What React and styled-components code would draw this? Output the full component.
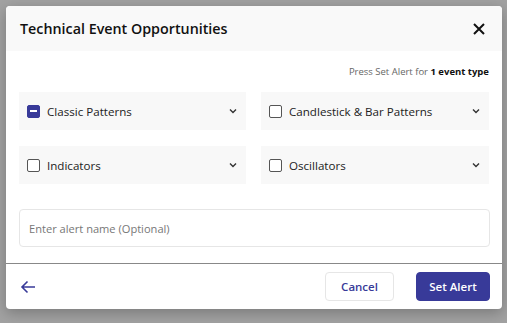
import React from 'react';
import styled, { createGlobalStyle } from 'styled-components';

const GlobalStyle = createGlobalStyle`
  html, body {
    margin: 0;
    padding: 0;
    background: #a2a2a2;
    font-family: "Open Sans", "Noto Sans", sans-serif;
  }
  * { box-sizing: border-box; }
`;

const Overlay = styled.div`
  width: 507px;
  height: 323px;
  padding: 6px 5px 0 6px;
  background: #a2a2a2;
  overflow: hidden;
`;

const Modal = styled.div`
  width: 496px;
  height: 303px;
  background: #fff;
  border-radius: 4px;
  box-shadow: 0 4px 14px rgba(0, 0, 0, 0.25);
  display: flex;
  flex-direction: column;
  overflow: hidden;
`;

const Header = styled.div`
  height: 45px;
  background: #f9f9f9;
  display: flex;
  align-items: center;
  justify-content: space-between;
  padding: 0 15px 0 14px;
`;

const Title = styled.h2`
  margin: 0;
  font-size: 14.3px;
  font-weight: 600;
  color: #111;
`;

const CloseBtn = styled.button`
  border: 0;
  background: none;
  padding: 0;
  width: 16px;
  height: 16px;
  display: flex;
  align-items: center;
  justify-content: center;
  cursor: pointer;
`;

const Body = styled.div`
  padding: 14px 12px 16px 13px;
  display: flex;
  flex-direction: column;
`;

const Hint = styled.div`
  text-align: right;
  font-size: 9.5px;
  color: #666;
  line-height: 13px;
  padding-right: 1px;
  b { color: #111; font-weight: 700; }
`;

const Grid = styled.div`
  margin-top: 14px;
  display: grid;
  grid-template-columns: 227px 228px;
  column-gap: 15px;
  row-gap: 16px;
`;

const Card = styled.div`
  height: 38px;
  background: #f8f8f8;
  display: flex;
  align-items: center;
  padding: 0 8px 0 8px;
  cursor: pointer;
`;

const Box = styled.span`
  width: 13px;
  height: 13px;
  border-radius: 2px;
  border: 1px solid ${p => (p.$on ? '#383a99' : '#555')};
  background: ${p => (p.$on ? '#383a99' : '#fff')};
  display: flex;
  align-items: center;
  justify-content: center;
  flex-shrink: 0;
  &::after {
    content: '';
    display: ${p => (p.$on ? 'block' : 'none')};
    width: 7px;
    height: 2px;
    background: #fff;
  }
`;

const Label = styled.span`
  margin-left: 7px;
  font-size: 11.6px;
  color: #222;
  flex: 1;
`;

const Input = styled.input`
  margin-top: 25px;
  height: 38px;
  width: 100%;
  border: 1px solid #e6e6e6;
  border-radius: 4px;
  padding: 0 9px;
  font-family: inherit;
  font-size: 11.1px;
  color: #222;
  outline: none;
  &::placeholder { color: #777; }
`;

const Footer = styled.div`
  border-top: 1px solid #888;
  flex: 1;
  display: flex;
  align-items: center;
  padding: 0 12px 0 14px;
  gap: 22px;
`;

const Back = styled.button`
  border: 0;
  background: none;
  padding: 0;
  margin-right: auto;
  display: flex;
  cursor: pointer;
`;

const Button = styled.button`
  height: 29px;
  border-radius: 4px;
  font-family: inherit;
  font-size: 11.5px;
  font-weight: 600;
  cursor: pointer;
  padding: 0;
  width: ${p => (p.$primary ? '74px' : '69px')};
  border: 1px solid ${p => (p.$primary ? '#383a99' : '#e6e6e6')};
  background: ${p => (p.$primary ? '#383a99' : '#fff')};
  color: ${p => (p.$primary ? '#fff' : '#383a99')};
`;

const Chevron = () => (
  <svg width="10" height="10" viewBox="0 0 10 10">
    <path d="M2 3.5 L5 6.5 L8 3.5" fill="none" stroke="#333" strokeWidth="1.4" />
  </svg>
);

const groups = [
  { name: 'Classic Patterns', on: true },
  { name: 'Candlestick & Bar Patterns' },
  { name: 'Indicators' },
  { name: 'Oscillators' },
];

export default function App() {
  return (
    <>
      <GlobalStyle />
      <Overlay>
        <Modal>
          <Header>
            <Title>Technical Event Opportunities</Title>
            <CloseBtn>
              <svg width="14" height="14" viewBox="0 0 14 14">
                <path d="M2 2 L12 12 M12 2 L2 12" stroke="#111" strokeWidth="2" />
              </svg>
            </CloseBtn>
          </Header>
          <Body>
            <Hint>Press Set Alert for <b>1 event type</b></Hint>
            <Grid>
              {groups.map(g => (
                <Card key={g.name}>
                  <Box $on={g.on} />
                  <Label>{g.name}</Label>
                  <Chevron />
                </Card>
              ))}
            </Grid>
            <Input placeholder="Enter alert name (Optional)" />
          </Body>
          <Footer>
            <Back>
              <svg width="16" height="14" viewBox="0 0 16 14">
                <path d="M15 7 H2 M7.5 1.5 L2 7 L7.5 12.5" fill="none" stroke="#383a99" strokeWidth="1.6" />
              </svg>
            </Back>
            <Button>Cancel</Button>
            <Button $primary>Set Alert</Button>
          </Footer>
        </Modal>
      </Overlay>
    </>
  );
}
